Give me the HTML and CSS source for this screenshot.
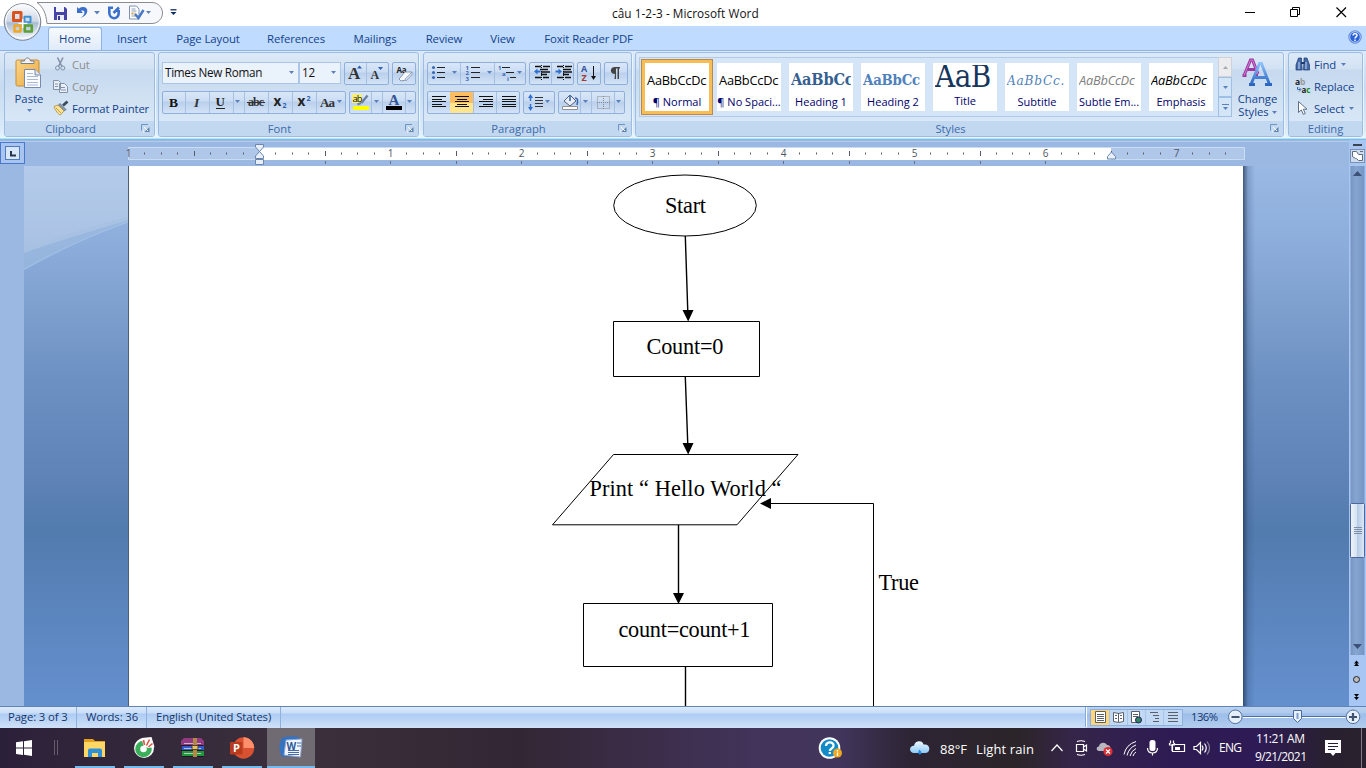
FILE: index.html
```html
<!DOCTYPE html>
<html lang="vi">
<head>
<meta charset="utf-8">
<title>câu 1-2-3 - Microsoft Word</title>
<link rel="stylesheet" href="styles.css">
</head>
<body>
<svg class="defs" width="0" height="0">
  <defs>
    <linearGradient id="orb" x1="0" y1="0" x2="0" y2="1"><stop offset="0" stop-color="#fdfdfe"/><stop offset=".48" stop-color="#cfd8e6"/><stop offset=".52" stop-color="#a9bbd4"/><stop offset="1" stop-color="#f4f9ff"/></linearGradient>
    <linearGradient id="clip" x1="0" y1="0" x2="1" y2="1"><stop offset="0" stop-color="#fbd68a"/><stop offset="1" stop-color="#e9a83f"/></linearGradient>
    <linearGradient id="blueA" x1="0" y1="0" x2="0" y2="1"><stop offset="0" stop-color="#8cc0ff"/><stop offset="1" stop-color="#2a66c0"/></linearGradient>
    <linearGradient id="cloud" x1="0" y1="0" x2="0" y2="1"><stop offset="0" stop-color="#eef8ff"/><stop offset="1" stop-color="#8ccbf6"/></linearGradient>
    <symbol id="arr" viewBox="0 0 5 3"><path d="M0 0h5L2.500 3z" fill="#5a80bd"/></symbol>
    <symbol id="launch" viewBox="0 0 9 9"><path d="M.5 6.500V.5H7" fill="none" stroke="#6f94c0"/><path d="M8.500 3v5.500H3z" fill="#5e83b3"/><path d="M3 3l4 4" stroke="#fff"/><path d="M2.500 5.500v3h6" fill="none" stroke="#fff" stroke-width=".5"/></symbol>
  </defs>
</svg>
<div class="app">
  <header class="titlebar">
    <svg class="quick" width="200" height="26" viewBox="0 0 200 26">
      <path d="M37 2.500H152c6 0 10.500 5 10.500 10.500S158 23.500 152 23.500H47C46 13 43 7 37 2.500z" fill="#f6f8fb" stroke="#8a8c90"/>
      <g><path d="M54 7h11l2 2v11H54z" fill="#4644a8"/><path d="M56 7h8v5h-8z" fill="#f2f4ff"/><path d="M57 15h7v5h-7z" fill="#e9edfa"/><path d="M58 16h2v4h-2z" fill="#383890"/></g>
      <path d="M77 7v6h6l-2-2.200c4-1.800 5.500 3-.5 7.200 8.500-2.500 9-11.500 2-11-1.600.1-2.600.8-3.600 1.700z" fill="#3c6fc9"/>
      <use href="#arr" x="94" y="11" width="6" height="3.500"/>
      <path d="M109.300 8.500v4c0 7.500 9.400 7.500 9.400 .5V10M113 7.800h-5M113.500 13l5.500-5.500" fill="none" stroke="#3b70cb" stroke-width="2.600"/>
      <path d="M129.500 6h7l2.500 3v10h-9.500z" fill="#fff" stroke="#7d93b5"/><path d="M131.500 9h4M131.500 11h5M131.500 16h5" stroke="#8ba0bf"/><path d="M131.500 13.500h4" stroke="#d89b45" stroke-width="2" stroke-dasharray="2 1"/><path d="M135 14l3.500 4 5-8" fill="none" stroke="#4a79c6" stroke-width="2.500"/>
      <use href="#arr" x="146" y="11" width="5" height="3"/>
      <path d="M170.500 9.800h6" stroke="#102c60" stroke-width="1.300"/><path d="M170.500 12h6l-3 3z" fill="#102c60"/>
    </svg>
    <span class="doc-title">câu 1-2-3 - Microsoft Word</span>
    <svg class="winbtns" width="130" height="26" viewBox="1236 0 130 26" fill="none" stroke="#000"><path d="M1245 12.500h10M1290.500 9.500h7v7h-7zM1292.500 9V7.500h7v7H1298"/><path d="M1336.500 7.500l9.500 9.500M1346 7.500l-9.500 9.500" stroke-width="1.200"/></svg>
  </header>
  <svg class="office" width="42" height="42" viewBox="0 0 42 42">
    <circle cx="21.500" cy="22" r="18.300" fill="url(#orb)" stroke="#6c7584" stroke-width=".9"/><circle cx="21.500" cy="21.500" r="16.800" fill="none" stroke="#fff"/>
    <g fill="none"><path d="M12.500 12.500h7.500v8h-7.500z" stroke="#d9541e" stroke-width="3" stroke-linejoin="round"/><path d="M23.500 16.700h6v5.500h-6z" stroke="#3f91d4" stroke-width="2" stroke-linejoin="round"/><path d="M13.500 25.500h6v6h-6z" stroke="#f1a722" stroke-width="2.400" stroke-linejoin="round"/><path d="M23.800 25.500h7v6h-7z" stroke="#5ba033" stroke-width="2.600" stroke-linejoin="round"/></g>
    <path d="M21.700 19v9M17.500 23.300h9" stroke="#fff" stroke-width="1.200"/>
  </svg>
  <nav class="tabs">
    <span class="tab t-home on">Home</span><span class="tab t-ins">Insert</span><span class="tab t-page">Page Layout</span><span class="tab t-ref">References</span><span class="tab t-mail">Mailings</span><span class="tab t-rev">Review</span><span class="tab t-view">View</span><span class="tab t-fox">Foxit Reader PDF</span>
    <svg class="help" width="14" height="14" viewBox="0 0 14 14"><circle cx="7" cy="7" r="6.300" fill="#2c62d8" stroke="#7d9fd8"/><circle cx="7" cy="7" r="5.300" fill="none" stroke="#d4e4ff" stroke-width=".8"/><path d="M5 5.500c0-2.600 4.200-2.400 4 0C8.900 6.800 7 7 7 8.500M7 9.500v1.500" fill="none" stroke="#fff" stroke-width="1.500"/></svg>
  </nav>

  <section class="ribbon">
    <div class="group g-clip">
      <div class="body clip-body">
        <div class="big paste">
          <svg width="28" height="32" viewBox="0 0 28 32"><rect x="1" y="3" width="23" height="26" rx="1.500" fill="url(#clip)" stroke="#c78e36"/><path d="M6 6.500V4h3.500c.5-4 5.500-4 6 0H19v2.500z" fill="#f3f3f4" stroke="#7b7f88"/><path d="M9.500 12.500H20l5.500 5.500v12.500h-16z" fill="#fbfcff" stroke="#7789ae"/><path d="M20 12.500V18h5.500" fill="#dde6f5" stroke="#7789ae"/><path d="M12 16.500h6M12 19.500h11M12 22.500h11M12 25.500h11M12 28h11" stroke="#a9b8d3"/></svg>
          <span>Paste</span><svg width="5" height="3"><use href="#arr"/></svg>
        </div>
        <div class="rows">
          <div class="row off"><svg width="16" height="16" viewBox="0 0 16 16" fill="none" stroke="#8492a8"><path d="M4.500 1.500l4.500 9M10 1.500l-4.500 9" stroke-width="1.600"/><circle cx="4.500" cy="12" r="2"/><circle cx="9.800" cy="12" r="2"/></svg>Cut</div>
          <div class="row off"><svg width="16" height="16" viewBox="0 0 16 16" fill="#e9eff9" stroke="#8492a8"><path d="M.5 2.500h5l2 2v7h-7zM6.500 5.500h5l3 3v6h-8z"/><path d="M2 6h3M2 8.500h3M8 9.500h4M8 12h5"/></svg>Copy</div>
          <div class="row"><svg width="16" height="16" viewBox="0 0 16 16"><path d="M14.500 1.500L10 5.500" stroke="#3b4a60" stroke-width="2.800"/><path d="M7 3.500l6 6-1.500 1.500-6-6z" fill="#8d9cad" stroke="#526278" stroke-width=".7"/><path d="M1 6.500l4-1.500 6 6-3.500 4c-2-.5-5-4-6.500-8.500z" fill="#f7e39a" stroke="#b18b35" stroke-width=".8"/><path d="M3 8l5 5" stroke="#c79b45"/></svg>Format Painter</div>
        </div>
      </div>
      <div class="glabel"><span>Clipboard</span><svg width="9" height="9"><use href="#launch"/></svg></div>
    </div>

    <div class="group g-font">
      <div class="body lines">
        <div class="line">
          <div class="combo c-name"><span>Times New Roman</span><svg width="5" height="3"><use href="#arr"/></svg></div>
          <div class="combo c-size"><span>12</span><svg width="5" height="3"><use href="#arr"/></svg></div>
          <div class="btns grow"><svg width="43" height="21" viewBox="346 63 43 21"><path d="M367.500 63v21" class="sep"/><text x="349" y="79" class="ser" font-size="17">A</text><path d="M358 68.500h5l-2.500-3z" fill="#2e5db0"/><text x="371.500" y="79" class="ser" font-size="12">A</text><path d="M379 67h5l-2.500 3z" fill="#2e5db0"/></svg></div>
          <div class="btns clear"><svg width="22" height="21" viewBox="393 63 22 21"><text x="396.500" y="73" font-size="8" fill="#25324a" class="sansb" textLength="10">Aa</text><path d="M399 79l6-7 7 0-6 8-5 1z" fill="#f6f8ff" stroke="#8794ab"/><path d="M412 72v3l-6 6-1-2z" fill="#ccd6ea" stroke="#8794ab" stroke-width=".6"/></svg></div>
        </div>
        <div class="line">
          <div class="btns biu"><svg width="182" height="21" viewBox="163 92 182 21"><path class="sep" d="M185.500 92v21M209.500 92v21M233.500 92v21M244.500 92v21M268.500 92v21M292.500 92v21M316.500 92v21"/><text class="ser" x="169" y="106.500" font-size="13.500" style="fill:#111">B</text><text class="ser it" x="194" y="106.500" font-size="13.500">I</text><text class="ser" x="215.500" y="105.500" font-size="13" style="fill:#222">U</text><path d="M216 108.500h9" stroke="#222"/><use href="#arr" x="235" y="100" width="5" height="3"/><text class="ser" x="248" y="106" font-size="12" textLength="16">abc</text><path d="M247 102.500h18" stroke="#333"/><text class="sansb" x="273.500" y="106" font-size="13.500">x</text><text class="sansb" x="282.500" y="108" font-size="7" style="fill:#2e5db0">2</text><text class="sansb" x="297.500" y="106" font-size="13.500">x</text><text class="sansb" x="306.500" y="101" font-size="7" style="fill:#2e5db0">2</text><text class="ser" x="320" y="107" font-size="13" textLength="15">Aa</text><use href="#arr" x="337" y="100" width="5" height="3"/></svg></div>
          <div class="btns color"><svg width="65" height="21" viewBox="350 92 65 21"><path class="sep" d="M371.500 92v21M382.500 92v21M405.500 92v21"/><path d="M352 94h10v9h-10z" fill="#f4ef79"/><text x="352.500" y="101.500" font-size="9.500" textLength="10" fill="#111">ab</text><path d="M367.500 95.500l-6 7.500M361 103l-3.500 1.500" stroke="#69809e" stroke-width="2.300"/><path d="M353 106h16v4h-16z" fill="#ffff00"/><use href="#arr" x="374" y="100" width="5" height="3"/><text class="ser" x="388.500" y="105" font-size="15" style="fill:#305493">A</text><path d="M386 106h16v4h-16z" fill="#000"/><use href="#arr" x="407" y="100" width="5" height="3"/></svg></div>
        </div>
      </div>
      <div class="glabel"><span>Font</span><svg width="9" height="9"><use href="#launch"/></svg></div>
    </div>

    <div class="group g-para">
      <div class="body lines">
        <div class="line">
          <div class="btns p-list"><svg width="97" height="21" viewBox="428 63 97 21"><path class="sep" d="M460.500 63v21M494.500 63v21"/><g fill="#3a67b4"><circle cx="433.500" cy="67.500" r="1.500"/><circle cx="433.500" cy="72.500" r="1.500"/><circle cx="433.500" cy="77.500" r="1.500"/></g><g font-size="6" class="sansb"><text x="465.500" y="69.500" class="bl">1</text><text x="465.500" y="75" class="bl">2</text><text x="465.500" y="80.500" class="bl">3</text><text x="498" y="70" class="bl">1</text><text x="502" y="76" class="bl">a</text><text x="507" y="81" class="bl">i</text></g><path d="M437 67.500h8M437 72.500h8M437 77.500h8M471 67.500h9M471 72.500h9M471 77.500h9M502 67.500h8M506 72.500h8M510 77.500h6" stroke="#222"/><use href="#arr" x="452" y="71" width="5" height="3"/><use href="#arr" x="487" y="71" width="5" height="3"/><use href="#arr" x="517" y="71" width="5" height="3"/></svg></div>
          <div class="btns p-ind"><svg width="43" height="21" viewBox="530 63 43 21"><path class="sep" d="M551.500 63v21"/><path d="M535 66.500h6M543 66.500h7M540 69.500h8M541 72h9M541 74.500h6M535 77.500h6M543 77.500h6M557 66.500h6M565 66.500h7M563 69.500h8M563 72h9M563 74.500h6M557 77.500h6M565 77.500h6" stroke="#111" stroke-width="1.400"/><path d="M541.500 65v15M563.500 65v15" stroke="#111" stroke-dasharray="1 1"/><path d="M534 71.500l3.500-3v2h3v2h-3v2zM562 71.500l-3.500-3v2h-3v2h3v2z" fill="#2f6fd0"/></svg></div>
          <div class="btns p-sq"><svg width="22" height="21" viewBox="578 63 22 21"><text class="sansb" x="581" y="72" font-size="9" style="fill:#35589c">A</text><text class="sansb" x="581.500" y="81" font-size="9" style="fill:#a33a3a">Z</text><path d="M593.500 66v12" stroke="#111"/><path d="M591 76h5l-2.500 4z" fill="#111"/></svg></div>
          <div class="btns p-sq"><svg width="22" height="21" viewBox="605 63 22 21"><path d="M615 74c-5.500 0-5.500-7 0-7h5v1.500h-1V79h-1.500V68.500H616V79h-1.500z" fill="#444"/></svg></div>
        </div>
        <div class="line">
          <div class="btns p-align"><svg width="91" height="21" viewBox="428 92 91 21"><path d="M450 92h23v21h-23z" fill="#fdbd62"/><path d="M450 103h23v10h-23z" fill="#ffe68e"/><path class="sep" d="M473.500 92v21M496.500 92v21"/><path d="M432 96.500h14M432 99.500h10M432 101.500h14M432 104.500h10M432 106.500h14M455 96.500h14M457 99.500h10M455 101.500h14M457 104.500h10M455 106.500h14M479 96.500h14M483 99.500h10M479 101.500h14M483 104.500h10M479 106.500h14M502 96.500h14M502 99.500h14M502 101.500h14M502 104.500h14M502 106.500h14" stroke="#111" stroke-width="1.100"/></svg></div>
          <div class="btns p-space"><svg width="30" height="21" viewBox="524 92 30 21"><path d="M530.500 96v5M530.500 104v5" stroke="#2f6fd0" stroke-width="1.500"/><path d="M528 98h5l-2.500-4zM528 107h5l-2.500 4z" fill="#2f6fd0"/><path d="M535 97.500h8M535 100.500h8M535 103.500h8M535 106.500h8" stroke="#333"/><use href="#arr" x="545" y="100" width="5" height="3"/></svg></div>
          <div class="btns p-shade"><svg width="65" height="21" viewBox="559 92 65 21"><path class="sep" d="M580.500 92v21M591.500 92v21M614.500 92v21"/><path d="M564 101l6-6 6 6-6 5z" fill="#e9edf5" stroke="#4e607b"/><path d="M570 95v6M575 98c3 0 3 3 2 7" fill="none" stroke="#3b67ad" stroke-width="1.600"/><path d="M562.500 106.500h15v3h-15z" fill="#fff" stroke="#8f8f94"/><use href="#arr" x="583" y="100" width="5" height="3"/><path d="M597.500 96.500h12v12h-12zM603.500 96v13M597 102.500h13" fill="none" stroke="#888" stroke-dasharray="1 1"/><use href="#arr" x="616" y="100" width="5" height="3"/></svg></div>
        </div>
      </div>
      <div class="glabel"><span>Paragraph</span><svg width="9" height="9"><use href="#launch"/></svg></div>
    </div>

    <div class="group g-style">
      <div class="body style-body">
        <div class="gallery">
          <div class="card sel"><div class="smp">AaBbCcDc</div><span>¶ Normal</span></div>
          <div class="card"><div class="smp">AaBbCcDc</div><span>¶ No Spaci...</span></div>
          <div class="card"><div class="smp h1">AaBbCc</div><span>Heading 1</span></div>
          <div class="card"><div class="smp h2">AaBbCc</div><span>Heading 2</span></div>
          <div class="card"><div class="smp ttl">AaB</div><span>Title</span></div>
          <div class="card"><div class="smp sub">AaBbCc.</div><span>Subtitle</span></div>
          <div class="card"><div class="smp se">AaBbCcDc</div><span>Subtle Em...</span></div>
          <div class="card"><div class="smp em">AaBbCcDc</div><span>Emphasis</span></div>
        </div>
        <div class="gscroll">
          <i class="dim"><svg width="5" height="3" viewBox="0 0 5 3"><path d="M0 3h5L2.500 0z" fill="#a5a8ad"/></svg></i><i><svg width="5" height="3"><use href="#arr"/></svg></i><i><svg width="7" height="6" viewBox="0 0 7 6"><path d="M0 .5h7" stroke="#5a80bd"/><path d="M1 3h5L3.500 6z" fill="#5a80bd"/></svg></i>
        </div>
        <div class="big change">
          <svg width="32" height="30" viewBox="0 0 32 30"><path d="M2 18.500L8.500 3h2L16 17M5 12.500h9M.5 18.500h4M13 18.500h3" fill="none" stroke="#9a3a9e" stroke-width="3"/><path d="M2 18.500L8.500 3h2l5.500 14" fill="none" stroke="#d678d8" stroke-width="1"/><path d="M7 27.500h6M9 27.500l8.500-21h2l8 21M23 27.500h7M13 20.500h11" fill="none" stroke="url(#blueA)" stroke-width="2.800"/></svg>
          <span>Change</span><span>Styles <svg width="5" height="3"><use href="#arr"/></svg></span>
        </div>
      </div>
      <div class="glabel"><span>Styles</span><svg width="9" height="9"><use href="#launch"/></svg></div>
    </div>

    <div class="group g-edit">
      <div class="body rows edit-rows">
        <div class="row"><svg width="16" height="16" viewBox="0 0 16 16"><path d="M3.500 2h3v3l.7 9H1V9zM9 2h3l2.500 7v5h-6l.5-9z" fill="#4469a8" stroke="#1e3a6e" stroke-width=".7"/><path d="M4 6v7M11 6v7" stroke="#cbdcf5"/><path d="M6 7h4" stroke="#1e3a6e" stroke-width="2"/></svg>Find<svg class="dd" width="5" height="3"><use href="#arr"/></svg></div>
        <div class="row"><svg width="16" height="16" viewBox="0 0 16 16"><text x="0" y="7" font-size="8.500" class="sansb">a</text><text x="5" y="7" font-size="8.500" class="sansb" style="fill:#999">b</text><path d="M2.500 9v2.500h3M4 9.500l2 2-2 2" fill="none" stroke="#3d69b4"/><text x="6.500" y="14.500" font-size="8" class="sansb">a</text><text x="11.300" y="14.500" font-size="8" class="sansb" style="fill:#168a24">c</text></svg>Replace</div>
        <div class="row"><svg width="16" height="16" viewBox="0 0 16 16"><path d="M3.500 1.500v11l2.800-2.600 2 4.500 2-.9-2-4.300h3.700z" fill="#fff" stroke="#5f6f88"/></svg>Select<svg class="dd" width="5" height="3"><use href="#arr"/></svg></div>
      </div>
      <div class="glabel"><span>Editing</span></div>
    </div>
  </section>

  <svg class="ruler" width="1366" height="26" viewBox="0 140 1366 26">
    <defs>
      <pattern id="tick" x="260" y="147" width="131" height="18" patternUnits="userSpaceOnUse"><path d="M15.500 5.500v2M32.500 5.500v2M48.500 5.500v2M65.500 4v5M81.500 5.500v2M97.500 5.500v2M114.500 5.500v2" stroke="#555b66"/></pattern>
      <pattern id="sub" x="260" y="160" width="131" height="6" patternUnits="userSpaceOnUse"><path d="M65.500 1v3M130.500 1v3" stroke="#65738a"/></pattern>
    </defs>
    <path d="M0 140h1366v26H0z" fill="#9ab8e1"/><path d="M0 141h1366v1H0z" fill="#b4cceb"/>
    <path d="M128.500 147.500h1116v12h-1116z" fill="#afc8ea" stroke="#cadcf3"/>
    <path d="M260 148h851v12H260z" fill="#fff"/>
    <path d="M140 147h1092v13H140z" fill="url(#tick)"/><path d="M320 160h780v5H320z" fill="url(#sub)"/>
    <g class="nums"><text x="128.500" y="157">1</text><text x="390.500" y="157">1</text><text x="521.500" y="157">2</text><text x="652.500" y="157">3</text><text x="783.500" y="157">4</text><text x="914.500" y="157">5</text><text x="1045.500" y="157">6</text><text x="1176.500" y="157">7</text></g>
    <g fill="#e8eff9" stroke="#6c87ae"><path d="M255.500 144.500h8v2.500l-4 4.500-4-4.500zM259.500 151.500l4 4.500v2.500h-8V156zM255.500 159.500h8v5h-8zM1111.500 152l4 4.500v2.500h-8v-2.500z"/></g>
    <rect x=".5" y="142.500" width="24" height="21" fill="#a9c5ef" stroke="#4a78cc"/><rect x="5.500" y="146.500" width="14" height="13" fill="#d9e6f8" stroke="#4f7bbd"/><path d="M11 151v4.500h5" fill="none" stroke="#26364f" stroke-width="2"/>
    <path d="M1349 140h17v26h-17z" fill="#a9c6f3"/><path d="M1353 145h9" stroke="#3a4350" stroke-width="2"/><rect x="1350.500" y="149.500" width="14" height="13" fill="#cfdcee" stroke="#7992b8"/><path d="M1352.500 151.500h4l2 3h4v6h-4l-2-2h-1l-3-2zM1360 151.500h3" fill="#fff" stroke="#5d6c83"/>
  </svg>

  <main class="work">
    <div class="vrule"></div>
    <div class="margin">
      <svg width="104" height="112" viewBox="24 166 104 112">
        <path d="M24 166h104v54.500Q72 236 24 253z" fill="#fff" fill-opacity=".26"/>
        <path d="M128 217Q72 231 24 250v20Q72 241 128 222z" fill="#a4bfe2" fill-opacity=".5"/>
        <path d="M24 269.500Q76 240 128 222" fill="none" stroke="#a9c5e8" stroke-opacity=".7" stroke-width="1.300"/>
      </svg>
    </div>
    <div class="page">
      <svg width="1114" height="540" viewBox="129 166 1114 540">
        <g fill="none" stroke="#000"><ellipse cx="685" cy="205.500" rx="71.300" ry="30.500"/><path d="M613.500 321.500h146v55h-146zM583.500 603.500h189v63h-189z"/><path d="M613.500 454.500H798L737 524.800H552.500z"/><path d="M685.300 236l2.500 76M685.300 377l2.500 68M678.500 525v70M685.500 667v39" stroke-width="1.400"/><path d="M768 503.500h105.500V706"/></g>
        <path d="M682.500 310h11l-5.300 11.500zM682.500 443h11l-5.300 11.500zM673 593h11l-5.500 11zM771 498v11l-11-5.500z"/>
        <g class="flow"><text x="665" y="213" textLength="41">Start</text><text x="646.500" y="354" textLength="77">Count=0</text><text x="589.500" y="496" textLength="192">Print “ Hello World “</text><text x="618.500" y="637" textLength="132">count=count+1</text><text x="878.500" y="590" textLength="40.500">True</text></g>
      </svg>
    </div>
    <div class="rest"></div>
    <svg class="scroll" width="17" height="540" viewBox="1349 166 17 540">
      <defs><linearGradient id="track"><stop offset="0" stop-color="#7695c2"/><stop offset=".4" stop-color="#86a5d0"/><stop offset="1" stop-color="#7495c6"/></linearGradient><linearGradient id="thumb"><stop offset="0" stop-color="#edf3fb"/><stop offset=".45" stop-color="#d7e3f2"/><stop offset=".5" stop-color="#b6cbe5"/><stop offset="1" stop-color="#dfeaf7"/></linearGradient></defs>
      <path d="M1349 166h17v540h-17z" fill="#a8c6f4"/><path d="M1350.500 166h14v489h-14z" fill="url(#track)"/>
      <path d="M1353 176h9l-4.500-5zM1353 644h9l-4.500 5z" fill="#3d5078"/>
      <rect x="1350.500" y="503.500" width="14" height="54" rx="1" fill="url(#thumb)" stroke="#4e6699"/><path d="M1354 527.500h8M1354 529.500h8M1354 531.500h8M1354 533.500h8" stroke="#7f8fa9"/>
      <path d="M1354 663.500h5l-2.500-3zM1354 666h5l-2.500-3zM1354 694h5l-2.500 3zM1354 697h5l-2.500 3z"/><circle cx="1356.500" cy="679.500" r="3" fill="#bbb" stroke="#222"/>
    </svg>
  </main>

  <footer class="status">
    <span class="s1">Page: 3 of 3</span><span class="s2">Words: 36</span><span class="s3">English (United States)</span><span class="gap"></span>
    <svg width="281" height="22" viewBox="1085 706 281 22">
      <path d="M1085.500 707v20" stroke="#86a8d6"/><path d="M1086.500 707v20" stroke="#fff"/>
      <path d="M1087 707h279v21h-279z" fill="#7fa6da" fill-opacity=".35"/>
      <rect x="1090.500" y="709.500" width="92" height="16" fill="#c2d9f5" stroke="#8eafda"/><path d="M1091 710h18v15h-18z" fill="#ffd67e"/><path d="M1109.500 710v15M1127.500 710v15M1145.500 710v15M1163.500 710v15" stroke="#a9c4e8"/>
      <g stroke="#5b5f68" fill="#fff"><path d="M1095.500 711.500h10v11h-10zM1113.500 712.500l5 1 5-1v9l-5 1-5-1zM1118.500 713v9M1131.500 711.500h8v11h-8z"/><path d="M1097 714.500h7M1097 716.500h7M1097 718.500h7M1097 720.500h7M1115 715.500h2M1115 718.500h2M1120 715.500h2M1120 718.500h2M1133 714.500h5M1133 716.500h5M1150 712.500h8M1153 715.500h6M1155 718.500h4M1153 721.500h6M1168 712.500h10M1168 715.500h10M1168 718.500h10M1168 721.500h10"/></g><circle cx="1138.500" cy="720" r="3" fill="#33855c" stroke="#226"/>
      <text x="1191" y="721" textLength="27">136%</text>
      <path d="M1243 716.500h103" stroke="#4b6ea4"/><path d="M1243 717.500h103" stroke="#fff"/>
      <g fill="#e5effb" stroke="#54739f"><circle cx="1235.300" cy="716.800" r="6.800"/><circle cx="1353" cy="716.800" r="6.800"/></g><path d="M1231.500 717h8M1349 717h8M1353 713v8" stroke="#3f536f" stroke-width="2.200"/>
      <path d="M1293.500 710.500h8v8l-4 4-4-4z" fill="#e8f1fc" stroke="#4a6b9f"/><path d="M1297.500 713v6" stroke="#7e9fcf" stroke-width="2"/>
    </svg>
  </footer>

  <footer class="taskbar">
    <svg width="1366" height="40" viewBox="0 728 1366 40">
      <path d="M16 742.300l7-1v6.200h-7zM24 741.200l8-1.200v7.500h-8zM16 748.500h7v6.500l-7-1zM24 748.500h8v7.500l-8-1.200z" fill="#fff"/><path d="M54.500 740v15M57.500 740v15" stroke="#645b6b"/>
      <path d="M267 728h48v40h-48z" fill="#706a73"/><path d="M75 766h40v2H75zM124 766h40v2h-40zM173 766h40v2h-40zM222 766h40v2h-40zM267 766h48v2h-48z" fill="#76b9ed"/>
      <path d="M84 739h9l2 2h10v16H84z" fill="#e6a11c"/><path d="M84 742h21v15H84z" fill="#ffd765"/><path d="M88 757v-6.500q0-2 2-2h10q2 0 2 2v6.500h-4v-4h-6v4z" fill="#2e91d8"/>
      <circle cx="144" cy="748" r="10" fill="#fff"/><circle cx="143.500" cy="749" r="5.800" fill="none" stroke="#3bae5a" stroke-width="5"/><path d="M143.500 746l-2-8 10-1 3 10-6 1z" fill="#fff"/><path d="M144.500 745l-1-5M146.500 745.500l3-6M148.500 747l4-3.500" stroke="#e25042" stroke-width="1.600"/>
      <g><path d="M181 741l3-3h17l3 3v4h-23z" fill="#933a82"/><path d="M182 746h22v4h-22z" fill="#315dc4"/><path d="M182 751h22v5h-22z" fill="#22973a"/><path d="M181 745.500h22M181 750.500h22M182 756.500h22" stroke="#1c1626" stroke-width="1.200"/><path d="M184 743.500h17M184 748.500h17M184 753.500h17" stroke="#ddd3e8" stroke-width=".8"/><path d="M193 738h4v19h-4z" fill="#b48842"/><path d="M192 745.500h6v4h-6z" fill="#e1c16b" stroke="#51452d"/></g>
      <circle cx="243.500" cy="748" r="10.700" fill="#d85232"/><path d="M243.500 737.300a10.700 10.700 0 0 1 10.700 10.700H243.500z" fill="#ff8e6b"/><rect x="230" y="742" width="12.500" height="12.500" rx="1" fill="#b93a1c"/><text x="233" y="752" class="pp">P</text>
      <path d="M282 738q7-3 17-1l-3 19-14 1q-5-10 0-19z" fill="#3473c2"/><path d="M286 740l16-1-1.500 18-16.500-2z" fill="#f2f6fc" stroke="#8ca8d3"/><text x="286.500" y="749.500" class="ww">W</text><path d="M297 743h4M297 746h4M288 752.500h11M288 754.500h11M288 750.500h11" stroke="#456ca8"/>
      <circle cx="829.500" cy="748" r="10.800" fill="#fff"/><circle cx="829.500" cy="748" r="8.800" fill="#138bc9"/><path d="M826 746c0-5 8-4.500 7.500 0-.2 2.500-3.700 2.500-3.700 5M829.800 752v2" fill="none" stroke="#fff" stroke-width="2.300"/><circle cx="837.500" cy="753" r="4.500" fill="#f1a81f"/><path d="M837.500 750v1.500M837.500 752.500v3.500" stroke="#fff" stroke-width="1.300"/>
      <path d="M914 753c-5 0-5.500-7 0-7.200 1-6 9-5.500 9.500-1.200 7-1.500 8 8.400 1.500 8.400z" fill="url(#cloud)"/><path d="M919.500 749.500c-4 6 3.500 6.500 1.500 2z" fill="#218ae0"/>
      <g class="tray"><text x="940" y="754" textLength="27">88°F</text><text x="976" y="754" textLength="58">Light rain</text><text x="1219" y="752" class="sm" textLength="23">ENG</text><text x="1256" y="743" class="sm" textLength="49">11:21 AM</text><text x="1255" y="761" class="sm" textLength="52">9/21/2021</text></g>
      <g fill="none" stroke="#fff" stroke-width="1.200"><path d="M1051.500 751l5.500-6 5.500 6M1076.500 744.500h7v7h-7zM1083.500 747l3-2v6l-3-2M1077 741.500q4-1.500 8 0M1077 754.500q4 1.500 8 0"/><path d="M1124 754.500q2-10 12-13M1127 755.500q2-8 9-10.500M1130 756q1.500-5.500 6-7.500M1133 756q1-3 3-4" stroke-width="1"/><path d="M1172.500 744.500h12v7h-12zM1169.500 743v2h5v-2M1172 745v6M1170.500 740.500v3M1173.500 740.500v3M1194 746.500h2.500l4-4v11l-4-4H1194zM1202 745.500q2 2.500 0 5M1204.500 743.500q3.500 4.500 0 9"/><path d="M1207 741.500q5 6.500 0 13" stroke="#8d849b"/><path d="M1147.500 748q0 5 5 5t5-5M1152.500 753v2.500"/></g>
      <rect x="1149.500" y="740" width="6" height="11" rx="2.500" fill="#fff"/><path d="M1175 747h5v3h-5z" fill="#fff"/>
      <path d="M1099 751c-4-1-2-5 0-4.500 0-4 6-5.500 8-1.500 4 0 5 5 1 6z" fill="#b9b7c0"/><circle cx="1108" cy="751.500" r="4.600" fill="#d92e35"/><path d="M1106 749.500l4 4M1110 749.500l-4 4" stroke="#fff" stroke-width="1.300"/>
      <path d="M1325 740h16v13h-5.500l-2.500 3-2.500-3H1325z" fill="#fff"/><path d="M1328 743.500h10M1328 746.500h10M1328 749.500h7" stroke="#281b36"/><path d="M1361.500 728v40" stroke="#817986"/>
    </svg>
  </footer>
</div>
</body>
</html>
```
FILE: styles.css
```css
* { box-sizing: border-box; }
body { margin: 0; width: 1366px; height: 768px; overflow: hidden; background: #fff; font: 11.5px "Open Sans", "Noto Sans", sans-serif; color: #15428b; }
svg { display: block; flex: none; }
svg text { white-space: pre; }
.defs { position: absolute; }
.app { position: relative; display: flex; flex-direction: column; height: 768px; }
.titlebar { height: 26px; display: flex; align-items: center; background: #fff; color: #111; }
.doc-title { margin-left: 412px; font-size: 11.8px; letter-spacing: .05px; white-space: nowrap; }
.winbtns { margin-left: auto; }
.office { position: absolute; left: 1px; top: 0; z-index: 2; }
.tabs { height: 24px; display: flex; align-items: flex-start; background: #bfdbff; padding-left: 48px; padding-top: 1px; }
.tab { height: 23px; line-height: 24px; text-align: center; flex: none; font-size: 11.4px; letter-spacing: -.1px; white-space: nowrap; }
.tab.on { background: linear-gradient(#f6faff, #e0ebf9); border: 1px solid #8fb3e3; border-bottom: 0; border-radius: 3px 3px 0 0; line-height: 22px; }
.t-home { width: 54px; } .t-ins { width: 60px; } .t-page { width: 92px; } .t-ref { width: 84px; } .t-mail { width: 74px; } .t-rev { width: 64px; } .t-view { width: 53px; } .t-fox { width: 119px; }
.help { margin: 3px 4px 0 auto; }
.ribbon { height: 90px; display: flex; gap: 4px; padding: 1px 3px 3px 4px; background: linear-gradient(#dce9f8, #c7daf0 40%, #dcebfa 90%, #e5f9ff); border: 1px solid #8db2e3; border-width: 1px 0; box-shadow: inset 0 -1px #a5e9f2; }
.group { height: 85px; border: 1px solid #9bbde2; border-radius: 3px; display: flex; flex-direction: column; background: linear-gradient(#dde9f7 0, #d3e2f3 16px, #c6d9ee 17px, #d9e8f7 70px); box-shadow: 1px 1px #eaf4fd; overflow: hidden; }
.g-clip { width: 151px; } .g-font { width: 261px; margin-left: -1px; } .g-para { width: 209px; } .g-style { width: 649px; margin-left: -1px; } .g-edit { width: 75px; }
.body { height: 68px; flex: none; }
.glabel { height: 15px; display: flex; align-items: center; justify-content: center; background: #c1d8f0; color: #3e6aaa; position: relative; line-height: 15px; font-size: 11.2px; }
.glabel span { padding-right: 18px; }
.g-edit .glabel span { padding-right: 0; }
.glabel svg { position: absolute; right: 4px; top: 3px; }
.clip-body { display: flex; }
.big { display: flex; flex-direction: column; align-items: center; line-height: 13px; font-size: 11.3px; }
.paste { width: 48px; padding-top: 4px; }
.paste span { margin: 3px 0 4px; }
.rows { display: flex; flex-direction: column; }
.row { height: 22px; display: flex; align-items: center; gap: 3px; font-size: 11.3px; letter-spacing: -.12px; white-space: nowrap; }
.row.off { color: #8d8d8d; }
.row .dd { margin-left: 2px; }
.edit-rows { padding-left: 6px; }
.lines { padding: 9px 0 0 3px; display: flex; flex-direction: column; gap: 6px; }
.line { display: flex; gap: 3px; height: 23px; }
.combo { height: 22px; background: #eaf2fb; border: 1px solid #abc6e8; color: #111; display: flex; align-items: center; justify-content: space-between; padding: 0 4px 2px 2px; font-size: 11.7px; letter-spacing: -.3px; }
.combo span { white-space: nowrap; }
.c-name { width: 137px; } .c-size { width: 42px; margin-left: -3px; }
.btns { height: 23px; border: 1px solid #8fafdc; border-radius: 2px; background: linear-gradient(#d9e7f8 0, #cbdcf3 9px, #b9cfec 10px, #d3e3f7 21px); overflow: hidden; }
.grow { width: 45px; } .clear { width: 24px; } .biu { width: 184px; } .color { width: 67px; }
.p-list { width: 99px; } .p-ind { width: 45px; } .p-sq { width: 24px; } .p-align { width: 93px; } .p-space { width: 32px; } .p-shade { width: 67px; }
.sep { stroke: #a6c0e2; fill: none; }
.ser { font-family: "Liberation Serif", serif; font-weight: 700; fill: #333; }
.it { font-style: italic; }
.sansb { font-family: "Open Sans", sans-serif; font-weight: 700; fill: #222; }
.bl { fill: #3a67b4; }
.style-body { display: flex; padding: 4px 0 0 3px; }
.gallery { width: 579px; height: 60px; background: #d4e5f7; border: 1px solid #b0cbea; border-right: 0; display: flex; gap: 8px; padding: 5px 5px; }
.card { width: 64px; height: 48px; background: #fff; text-align: center; color: #00006b; flex: none; font-size: 11px; }
.card > span { display: block; line-height: 16px; white-space: nowrap; margin-top: 1px; }
.card.sel { outline: 3px solid #f9bd55; box-shadow: 0 0 0 4px #b98a4c; }
.smp { height: 30px; padding-top: 3px; margin: 0 2px; width: 60px; overflow: hidden; text-align: left; white-space: nowrap; color: #000; font-size: 12.8px; line-height: 28px; letter-spacing: -.2px; }
.smp.h1, .smp.h2, .smp.ttl, .smp.sub { font-family: "DejaVu Serif", serif; font-stretch: condensed; }
.smp.h1 { font-weight: 700; color: #365f91; font-size: 16.2px; }
.smp.h2 { font-weight: 700; color: #4f81bd; font-size: 14.8px; letter-spacing: -.2px; }
.smp.ttl { color: #17365d; font-size: 31px; line-height: 22px; letter-spacing: -.5px; height: 25px; margin: 2px 2px 3px; padding: 0; }
.smp.sub { color: #4f81bd; font-style: italic; font-size: 13.5px; letter-spacing: .8px; }
.smp.se { color: #808080; font-style: italic; } .smp.em { font-style: italic; }
.gscroll { width: 14px; display: flex; flex-direction: column; }
.gscroll i { height: 20px; border: 1px solid #9ebfe6; background: #d5e5f8; display: flex; align-items: center; justify-content: center; }
.gscroll i.dim { background: #ececee; border-color: #cfd2d8; }
.change { width: 51px; } .change > span { white-space: nowrap; } .change span svg { display: inline-block; vertical-align: 2px; }
.change > svg { margin-bottom: 5px; }
.nums { font-size: 10px; fill: #4c5564; text-anchor: middle; }
.work { height: 540px; display: flex; background: linear-gradient(#9ab9e4 0, #8aabd9 90px, #6d91c2 210px, #5f83b7 310px, #527bae 365px, #5a84bc 440px, #6490ce 540px); }
.vrule { width: 24px; background: #9ab8e2; }
.margin { width: 105px; border-right: 1px solid #4f5e78; }
.page { width: 1114px; background: #fff; }
.rest { width: 106px; background: linear-gradient(90deg, rgba(35,55,85,.75), rgba(50,80,125,.25) 5px, transparent 12px); }
.flow { font: 22.3px "Liberation Serif", "Times New Roman", serif; fill: #000; }
.status { height: 22px; display: flex; border-top: 1px solid #5f85b8; background: linear-gradient(#dce9fa 0, #c9def8 6px, #adccf3 7px, #cfe1f8 21px); line-height: 20px; color: #15356e; font-size: 11.3px; }
.status > span { flex: none; white-space: nowrap; letter-spacing: -.1px; }
.s1, .s2, .s3 { border-right: 1px solid #90b0dc; }
.s1 { width: 77px; padding-left: 8px; } .s2 { width: 70px; padding-left: 9px; } .s3 { width: 134px; padding-left: 9px; } .status .gap { flex: 1; }
.status svg { margin-top: -1px; } .status text { font-size: 11.3px; fill: #15356e; }
.taskbar { height: 40px; background: linear-gradient(90deg, #2b2039 0, #33283a 130px, #3b303b 300px, #332634 520px, #42345b 760px, #42355b 840px, #2d2434 910px, #2b2529 1020px, #352548 1070px, #2e1b53 1170px, #2e1b55 1260px, #28202e 1330px, #29212e); }
.tray { fill: #fff; font-size: 13px; } .sm { font-size: 12px; }
.pp { fill: #fff; font: 700 11px "Open Sans", sans-serif; } .ww { fill: #2c5698; font: 700 10px "Open Sans", sans-serif; }
```
